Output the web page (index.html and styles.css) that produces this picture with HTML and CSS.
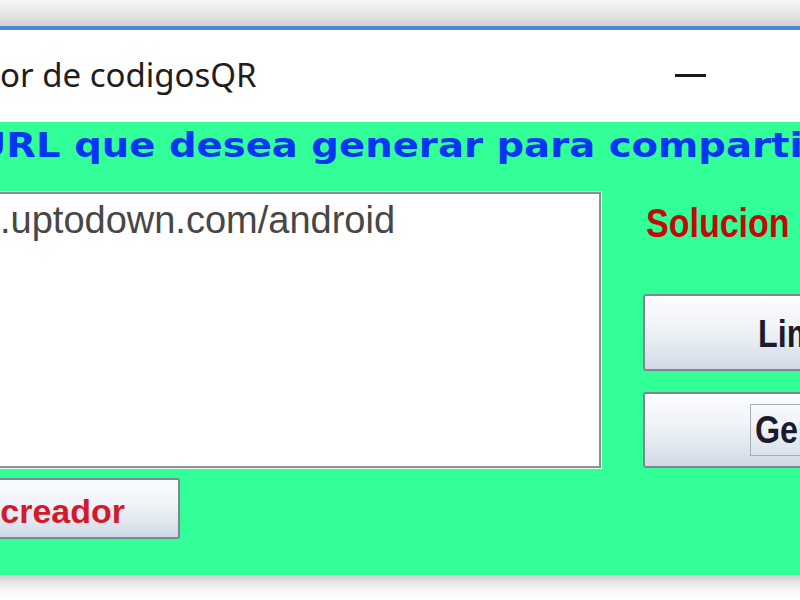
FILE: index.html
```html
<!DOCTYPE html>
<html lang="es">
<head>
<meta charset="utf-8">
<title>Generador de codigosQR</title>
<link rel="stylesheet" href="styles.css">
</head>
<body>
<div class="screen">
  <div class="backdrop"></div>
  <div class="window">
    <div class="titlebar">
      <div class="title">or de codigosQR</div>
      <div class="caption-btn"><span class="min-line"></span></div>
    </div>
    <div class="panel">
      <h1 class="heading"><span class="heading-text">URL que desea generar para compartir</span></h1>
      <div class="content">
        <div class="left">
          <div class="textarea">.uptodown.com/android</div>
          <button class="btn btn-creador">creador</button>
        </div>
        <div class="right">
          <div class="solucion"><span class="narrow">Solucion</span></div>
          <button class="btn btn-side btn-lim"><span class="narrow">Limpiar</span></button>
          <button class="btn btn-side btn-gen"><span class="focus"><span class="narrow">Generar</span></span></button>
        </div>
      </div>
    </div>
  </div>
  <div class="shadow"></div>
</div>
</body>
</html>
```

FILE: styles.css
```css
html, body {
  margin: 0;
  padding: 0;
  background: #ffffff;
}

body {
  width: 800px;
  height: 600px;
  overflow: hidden;
}

.screen {
  width: 800px;
  height: 600px;
  overflow: hidden;
  display: flex;
  flex-direction: column;
}

.backdrop {
  height: 26px;
  flex: none;
  background: linear-gradient(to bottom, #f6f6f6 0%, #e8e8e8 50%, #d3d3d3 100%);
}

.window {
  flex: none;
  border-top: 4px solid #4b8ad3;
  box-shadow: inset 0 1px 0 #9cc0ea;
}

.titlebar {
  height: 92px;
  background: #ffffff;
  display: flex;
  align-items: flex-start;
  border-top: 1px solid #ffffff;
  box-sizing: border-box;
}

.title {
  padding-top: 24px;
  font-family: "Noto Sans", "Open Sans", sans-serif;
  font-size: 33px;
  line-height: 40px;
  color: #221c1c;
  white-space: nowrap;
}

.caption-btn {
  margin-left: auto;
  margin-right: 74px;
  width: 72px;
  align-self: stretch;
  display: flex;
  align-items: center;
  justify-content: center;
}

.min-line {
  display: block;
  width: 31px;
  height: 3px;
  background: #1a1a1a;
  margin-top: -2px;
}

.panel {
  height: 453px;
  box-sizing: border-box;
  background: #33ff99;
  padding-top: 4px;
}

.heading {
  margin: 0 0 0 -25px;
  font-family: "DejaVu Sans", Verdana, sans-serif;
  font-weight: bold;
  font-size: 33px;
  line-height: 40px;
  color: #0636f4;
  white-space: nowrap;
}

.heading-text {
  display: inline-block;
  transform: scaleX(1.17);
  transform-origin: left center;
}

.content {
  display: flex;
  gap: 42px;
  margin-left: -10px;
  margin-top: 26px;
}

.left {
  flex: none;
  width: 611px;
  display: flex;
  flex-direction: column;
  gap: 10px;
}

.textarea {
  height: 276px;
  box-sizing: border-box;
  background: #ffffff;
  border: 2px solid #8d8f93;
  box-shadow: 0 0 0 1px #e9f7ef;
  padding: 4px 8px;
  font-family: "Liberation Sans", Arial, sans-serif;
  font-size: 38px;
  line-height: 44px;
  color: #474747;
  white-space: nowrap;
}

.btn {
  display: flex;
  align-items: center;
  box-sizing: border-box;
  margin: 0;
  border: 2px solid #80868e;
  border-radius: 3px;
  background: linear-gradient(to bottom, #fbfcfe 0%, #f1f4f8 40%, #e2e8f0 70%, #cfd9e7 100%);
  font-weight: bold;
  white-space: nowrap;
  cursor: default;
}

.btn-creador {
  width: 190px;
  height: 61px;
  justify-content: flex-end;
  padding: 4px 53px 0 0;
  font-family: "Liberation Sans", Arial, sans-serif;
  font-size: 34px;
  line-height: 40px;
  color: #d41a2a;
}

.right {
  flex: none;
  width: 220px;
  display: flex;
  flex-direction: column;
}

.narrow {
  display: inline-block;
  transform: scaleX(0.85);
  transform-origin: left center;
}

.solucion {
  padding-top: 8px;
  padding-left: 3px;
  font-family: "Liberation Sans", Arial, sans-serif;
  font-weight: bold;
  font-size: 40px;
  line-height: 46px;
  color: #c10a0a;
  white-space: nowrap;
}

.btn-side {
  width: 220px;
  justify-content: flex-start;
  font-family: "Liberation Sans", Arial, sans-serif;
  font-size: 38px;
  line-height: 50px;
  color: #1b1b2c;
}

.btn-lim {
  height: 77px;
  margin-top: 48px;
  padding: 2px 0 0 113px;
}

.btn-gen {
  height: 76px;
  margin-top: 21px;
  padding: 0 0 0 105px;
}

.focus {
  display: inline-block;
  border: 1px solid #a6aeb8;
  padding: 0 4px;
}

.shadow {
  flex: 1;
  background: linear-gradient(to bottom, #cfcfcf 0px, #e8e8e8 8px, #fbfbfb 18px, #ffffff 25px);
}
```
